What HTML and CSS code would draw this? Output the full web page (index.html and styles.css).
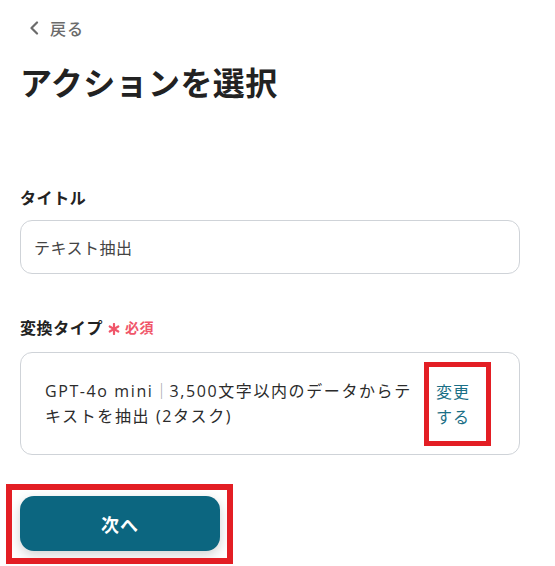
FILE: index.html
```html
<!DOCTYPE html>
<html lang="ja">
<head>
<meta charset="utf-8">
<title>アクションを選択</title>
<link rel="stylesheet" href="styles.css">
</head>
<body>
<div class="page">
  <a class="back" href="#">
    <svg class="chev" width="10" height="14" viewBox="0 0 10 14"><polyline points="8,1.5 2.5,7 8,12.5" fill="none" stroke="#6b6b6b" stroke-width="2.2" stroke-linecap="round" stroke-linejoin="round"/></svg>
    <span>戻る</span>
  </a>
  <h1 class="title">アクションを選択</h1>

  <div class="label label-first">タイトル</div>
  <div class="input">テキスト抽出</div>

  <div class="label label-second">変換タイプ<span class="req"><svg class="ast" width="12" height="12" viewBox="0 0 12 12"><g stroke="#f0566a" stroke-width="2.2" stroke-linecap="round"><line x1="6" y1="1" x2="6" y2="11"/><line x1="1.7" y1="3.5" x2="10.3" y2="8.5"/><line x1="1.7" y1="8.5" x2="10.3" y2="3.5"/></g></svg>必須</span></div>
  <div class="card">
    <div class="card-text">GPT-4o mini<span class="sep">｜</span>3,500文字以内のデータからテキストを抽出 (2タスク)</div>
    <a class="change" href="#">変更する</a>
  </div>

  <button class="next">次へ</button>
</div>
</body>
</html>
```

FILE: styles.css
```css
* { box-sizing: border-box; }
html, body { min-height: 566px; }
body {
  margin: 0;
  background: #ffffff;
  font-family: "Noto Sans CJK JP", "Noto Sans", sans-serif;
  color: #2b2b2b;
}
.page {
  width: 555px;
  min-height: 566px;
  padding: 0 35px 0 20px;
}
.back {
  display: flex;
  align-items: center;
  gap: 11px;
  margin-top: 16px;
  padding-left: 9px;
  height: 24px;
  font-size: 16px;
  line-height: 24px;
  letter-spacing: 1px;
  color: #6b6b6b;
  text-decoration: none;
  font-weight: 500;
}
.chev { display: block; }
.title {
  margin: 19px 0 0 0;
  font-size: 32px;
  line-height: 44px;
  font-weight: 700;
  letter-spacing: 0.4px;
  color: #222222;
}
.label {
  font-size: 16px;
  line-height: 24px;
  font-weight: 700;
  letter-spacing: 0.6px;
  color: #222222;
  display: flex;
  align-items: center;
}
.label-first { margin-top: 82px; }
.label-second { margin-top: 41px; }
.req {
  color: #f0566a;
  font-size: 14px;
  font-weight: 700;
  margin-left: 5px;
  display: flex;
  align-items: center;
  letter-spacing: 0.5px;
}
.ast {
  display: block;
  margin-right: 5px;
  position: relative;
  top: 2px;
}
.input {
  margin-top: 11px;
  width: 500px;
  height: 54px;
  border: 1px solid #cfd3d8;
  border-radius: 12px;
  padding: 0 13px;
  display: flex;
  align-items: center;
  font-size: 16px;
  letter-spacing: 0.5px;
  color: #444444;
}
.card {
  margin-top: 13px;
  width: 500px;
  height: 103px;
  border: 1px solid #cfd3d8;
  border-radius: 12px;
  padding: 0 49px 0 24px;
  display: flex;
  align-items: center;
  gap: 16px;
}
.card-text {
  width: 375px;
  font-family: "Open Sans", "Noto Sans CJK JP", sans-serif;
  font-size: 16px;
  line-height: 25px;
  letter-spacing: 1.6px;
  color: #2b2b2b;
}
.sep {
  font-family: "Noto Sans CJK JP", sans-serif;
  color: #a0a0a0;
  letter-spacing: 0;
}
.change {
  position: relative;
  width: 34px;
  font-size: 16px;
  line-height: 25px;
  letter-spacing: 1px;
  color: #1b6f86;
  text-decoration: none;
}
.change::after {
  content: "";
  position: absolute;
  left: -12px;
  right: -21px;
  top: -17px;
  bottom: -17px;
  border: 5px solid #e31e24;
}
.next {
  position: relative;
  margin-top: 41px;
  width: 200px;
  height: 55px;
  border: none;
  border-radius: 14px;
  background: #0c6680;
  color: #ffffff;
  font-family: "Noto Sans CJK JP", "Noto Sans", sans-serif;
  font-size: 18px;
  font-weight: 700;
  letter-spacing: 1px;
  box-shadow: 0 4px 12px rgba(0, 0, 0, 0.18);
  display: block;
}
.next::after {
  content: "";
  position: absolute;
  left: -14px;
  right: -13px;
  top: -12px;
  bottom: -13px;
  border: 6px solid #e31e24;
}
```
